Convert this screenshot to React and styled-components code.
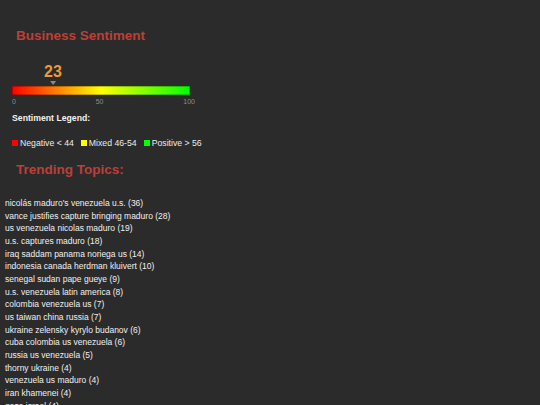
import React from 'react';
import styled, { createGlobalStyle } from 'styled-components';

const GlobalStyle = createGlobalStyle`
  html, body {
    margin: 0;
    padding: 0;
    background: #2b2b2b;
  }
  body {
    font-family: "Liberation Sans", Arial, sans-serif;
    color: #e6e6e6;
  }
`;

const Page = styled.div`
  padding: 0 5px;
  min-height: 405px;
  background: #2b2b2b;
`;

const Panel = styled.section`
  padding-left: 7px;
`;

const Title = styled.h2`
  margin: ${props => props.$top}px 0 0 4px;
  font-size: 13.5px;
  line-height: 18px;
  font-weight: 700;
  color: #bd3f37;
`;

const Gauge = styled.div`
  position: relative;
  width: 178px;
  margin-top: 18px;
  padding-top: 23px;
`;

const Marker = styled.div`
  position: absolute;
  top: 0;
  transform: translateX(-50%);
  display: flex;
  flex-direction: column;
  align-items: center;
`;

const MarkerValue = styled.span`
  font-size: 16px;
  line-height: 18px;
  font-weight: 700;
  color: #ec9a35;
`;

const MarkerArrow = styled.span`
  width: 0;
  height: 0;
  border-left: 3px solid transparent;
  border-right: 3px solid transparent;
  border-top: 4px solid #8a8a8a;
`;

const Bar = styled.div`
  height: 9px;
  border-radius: 1px;
  box-shadow: inset 0 0 0 1px rgba(0, 0, 0, 0.25);
  background: linear-gradient(to right, #ff0000 0%, #ffff00 50%, #00ff00 100%);
`;

const Scale = styled.div`
  display: flex;
  justify-content: space-between;
  width: 183px;
  margin-top: 2px;
  font-size: 7px;
  line-height: 9px;
  color: #8c8c8c;
`;

const LegendTitle = styled.div`
  margin-top: 5px;
  font-size: 8.7px;
  line-height: 14px;
  font-weight: 700;
  color: #f2f2f2;
`;

const LegendRow = styled.div`
  display: flex;
  align-items: center;
  gap: 7px;
  margin-top: 12px;
  font-size: 8.7px;
  line-height: 12px;
  color: #ececec;
`;

const LegendItem = styled.span`
  display: flex;
  align-items: center;
  gap: 2px;
`;

const Swatch = styled.span`
  width: 6px;
  height: 6px;
  background: ${props => props.$color};
`;

const TopicList = styled.ul`
  list-style: none;
  margin: 18px 0 0;
  padding: 0;
  font-size: 8.5px;
  line-height: 12.65px;
  color: #f0f0f0;
`;

const topics = [
  "nicolás maduro's venezuela u.s. (36)",
  'vance justifies capture bringing maduro (28)',
  'us venezuela nicolas maduro (19)',
  'u.s. captures maduro (18)',
  'iraq saddam panama noriega us (14)',
  'indonesia canada herdman kluivert (10)',
  'senegal sudan pape gueye (9)',
  'u.s. venezuela latin america (8)',
  'colombia venezuela us (7)',
  'us taiwan china russia (7)',
  'ukraine zelensky kyrylo budanov (6)',
  'cuba colombia us venezuela (6)',
  'russia us venezuela (5)',
  'thorny ukraine (4)',
  'venezuela us maduro (4)',
  'iran khamenei (4)',
  'gaza israel (4)',
];

const score = 23;

export default function App() {
  return (
    <>
      <GlobalStyle />
      <Page>
        <Panel>
          <Title $top={27}>Business Sentiment</Title>
          <Gauge>
            <Marker style={{ left: `${score}%` }}>
              <MarkerValue>{score}</MarkerValue>
              <MarkerArrow />
            </Marker>
            <Bar />
          </Gauge>
          <Scale>
            <span>0</span>
            <span>50</span>
            <span>100</span>
          </Scale>
          <LegendTitle>Sentiment Legend:</LegendTitle>
          <LegendRow>
            <LegendItem><Swatch $color="#ff0000" />Negative &lt; 44</LegendItem>
            <LegendItem><Swatch $color="#ffff00" />Mixed 46-54</LegendItem>
            <LegendItem><Swatch $color="#00ff00" />Positive &gt; 56</LegendItem>
          </LegendRow>
          <Title $top={12}>Trending Topics:</Title>
        </Panel>
        <TopicList>
          {topics.map(t => (
            <li key={t}>{t}</li>
          ))}
        </TopicList>
      </Page>
    </>
  );
}
